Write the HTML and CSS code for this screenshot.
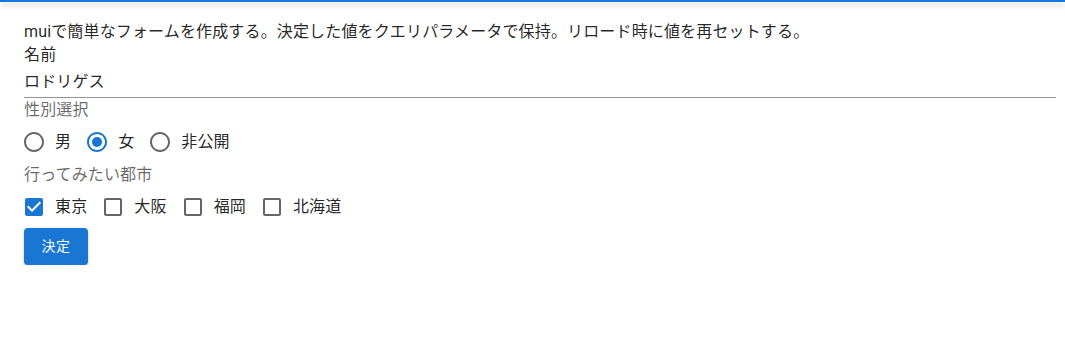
FILE: index.html
```html
<!DOCTYPE html>
<html lang="ja">
<head>
<meta charset="utf-8">
<title>mui form</title>
<link rel="stylesheet" href="styles.css">
</head>
<body>
<div class="appbar"></div>
<main class="page">
  <p class="intro">muiで簡単なフォームを作成する。決定した値をクエリパラメータで保持。リロード時に値を再セットする。</p>
  <p class="field-title">名前</p>
  <div class="input-wrap">
    <input class="input" type="text" value="ロドリゲス">
  </div>

  <div class="group">
    <div class="form-label">性別選択</div>
    <div class="row">
      <label class="control">
        <span class="icon-box">
          <svg class="icon radio-off" viewBox="0 0 24 24"><path d="M12 2C6.480 2 2 6.480 2 12s4.480 10 10 10 10-4.480 10-10S17.520 2 12 2zm0 18c-4.420 0-8-3.580-8-8s3.580-8 8-8 8 3.580 8 8-3.580 8-8 8z"/></svg>
        </span>
        <span class="control-label">男</span>
      </label>
      <label class="control">
        <span class="icon-box">
          <svg class="icon radio-on" viewBox="0 0 24 24"><path d="M12 2C6.480 2 2 6.480 2 12s4.480 10 10 10 10-4.480 10-10S17.520 2 12 2zm0 18c-4.420 0-8-3.580-8-8s3.580-8 8-8 8 3.580 8 8-3.580 8-8 8z"/><path d="M8.465 8.465C9.37 7.56 10.62 7 12 7C14.76 7 17 9.24 17 12C17 13.38 16.44 14.63 15.535 15.535C14.63 16.44 13.38 17 12 17C9.24 17 7 14.76 7 12C7 10.62 7.56 9.37 8.465 8.465Z"/></svg>
        </span>
        <span class="control-label">女</span>
      </label>
      <label class="control">
        <span class="icon-box">
          <svg class="icon radio-off" viewBox="0 0 24 24"><path d="M12 2C6.480 2 2 6.480 2 12s4.480 10 10 10 10-4.480 10-10S17.520 2 12 2zm0 18c-4.420 0-8-3.580-8-8s3.580-8 8-8 8 3.580 8 8-3.580 8-8 8z"/></svg>
        </span>
        <span class="control-label">非公開</span>
      </label>
    </div>
  </div>

  <div class="group">
    <div class="form-label">行ってみたい都市</div>
    <div class="row">
      <label class="control">
        <span class="icon-box">
          <svg class="icon check-on" viewBox="0 0 24 24"><path d="M19 3H5c-1.11 0-2 .9-2 2v14c0 1.1.89 2 2 2h14c1.11 0 2-.9 2-2V5c0-1.1-.89-2-2-2zm-9 14l-5-5 1.41-1.41L10 14.17l7.59-7.590L19 8l-9 9z"/></svg>
        </span>
        <span class="control-label">東京</span>
      </label>
      <label class="control">
        <span class="icon-box">
          <svg class="icon check-off" viewBox="0 0 24 24"><path d="M19 5v14H5V5h14m0-2H5c-1.1 0-2 .9-2 2v14c0 1.1.9 2 2 2h14c1.1 0 2-.9 2-2V5c0-1.1-.9-2-2-2z"/></svg>
        </span>
        <span class="control-label">大阪</span>
      </label>
      <label class="control">
        <span class="icon-box">
          <svg class="icon check-off" viewBox="0 0 24 24"><path d="M19 5v14H5V5h14m0-2H5c-1.1 0-2 .9-2 2v14c0 1.1.9 2 2 2h14c1.1 0 2-.9 2-2V5c0-1.1-.9-2-2-2z"/></svg>
        </span>
        <span class="control-label">福岡</span>
      </label>
      <label class="control">
        <span class="icon-box">
          <svg class="icon check-off" viewBox="0 0 24 24"><path d="M19 5v14H5V5h14m0-2H5c-1.1 0-2 .9-2 2v14c0 1.1.9 2 2 2h14c1.1 0 2-.9 2-2V5c0-1.1-.9-2-2-2z"/></svg>
        </span>
        <span class="control-label">北海道</span>
      </label>
    </div>
  </div>

  <button class="button" type="button">決定</button>
</main>
</body>
</html>
```

FILE: styles.css
```css
* { box-sizing: border-box; }

html, body {
  margin: 0;
  padding: 0;
  background: #ffffff;
}

body {
  font-family: Roboto, "Noto Sans CJK JP", "Liberation Sans", sans-serif;
  font-size: 16px;
  color: rgba(0, 0, 0, 0.87);
  letter-spacing: 0.00938em;
}

.appbar {
  height: 2px;
  background: #1976d2;
  box-shadow: 0px 2px 4px -1px rgba(0,0,0,0.2), 0px 4px 5px 0px rgba(0,0,0,0.14), 0px 1px 10px 0px rgba(0,0,0,0.12);
  position: relative;
  z-index: 1;
}

.page {
  padding: 18px 9px 0 24px;
}

.intro {
  margin: 0;
  line-height: 23px;
}

.field-title {
  margin: 0;
  line-height: 23px;
}

.input-wrap {
  border-bottom: 1px solid rgba(0, 0, 0, 0.42);
}

.input {
  display: block;
  width: 100%;
  border: 0;
  outline: 0;
  margin: 0;
  padding: 2px 0 6px;
  height: 31px;
  font: inherit;
  letter-spacing: inherit;
  line-height: 23px;
  color: rgba(0, 0, 0, 0.87);
  background: transparent;
}

.form-label {
  color: rgba(0, 0, 0, 0.6);
  line-height: 23px;
}

.row {
  display: flex;
  align-items: center;
}

.control {
  display: inline-flex;
  align-items: center;
  margin-left: -11px;
  margin-right: 16px;
  cursor: pointer;
}

.icon-box {
  display: inline-flex;
  padding: 9px;
}

.icon {
  width: 24px;
  height: 24px;
  display: block;
}

.radio-off, .check-off { fill: rgba(0, 0, 0, 0.6); }
.radio-on, .check-on { fill: #1976d2; }

.control-label {
  line-height: 24px;
}

.button {
  display: block;
  min-width: 64px;
  margin-top: 0;
  padding: 6px 16px;
  border: 0;
  border-radius: 4px;
  background: #1976d2;
  color: #ffffff;
  font-family: Roboto, "Noto Sans CJK JP", sans-serif;
  font-size: 14px;
  font-weight: 400;
  line-height: 24.5px;
  letter-spacing: 0.02857em;
  box-shadow: 0px 3px 1px -2px rgba(0,0,0,0.2), 0px 2px 2px 0px rgba(0,0,0,0.14), 0px 1px 5px 0px rgba(0,0,0,0.12);
  cursor: pointer;
}
```
